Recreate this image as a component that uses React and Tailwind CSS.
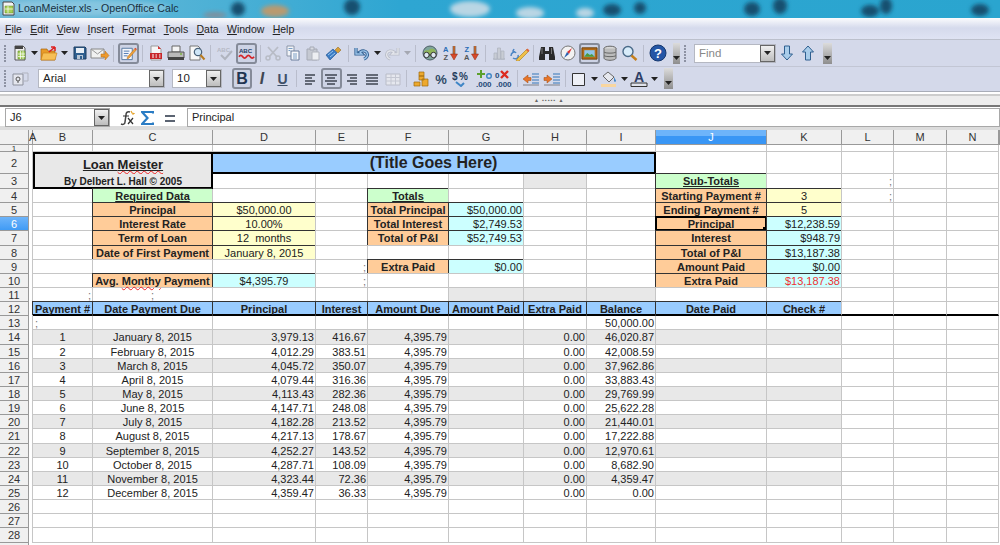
import React from 'react'

const COLS = 'grid grid-cols-[29px_4px_60px_120px_103px_52px_81px_75px_63px_69px_111px_75px_52px_53px_52px_1px]'
const LETTERS = ['A', 'B', 'C', 'D', 'E', 'F', 'G', 'H', 'I', 'J', 'K', 'L', 'M', 'N', '']

const LABEL = 'bg-[#ffcc99] font-bold text-center border-r border-b border-[#333] shadow-[-1px_-1px_0_#333]'
const YELLOW = 'bg-[#ffffcc] text-center border-r border-b border-[#333] shadow-[-1px_-1px_0_#333]'
const CYAN = 'bg-[#ccffff] text-right pr-px border-r border-b border-[#333] shadow-[-1px_-1px_0_#333]'
const CYAN_C = 'bg-[#ccffff] text-center border-r border-b border-[#333] shadow-[-1px_-1px_0_#333]'
const GREEN = 'bg-[#ccffcc] font-bold text-center underline border-r border-b border-[#333] shadow-[-1px_-1px_0_#333]'
const HEAD = 'bg-[#99ccff] font-bold text-center border-r border-b border-[#333] shadow-[-1px_-1px_0_#333]'
const SPECK = 'text-[#777] text-right pr-px'

const wavy = 'underline decoration-wavy decoration-[#e22] decoration-1'

const SHEET = {
  3: { H: { c: 'bg-[#e8e8e8]' }, J: { t: 'Sub-Totals', c: GREEN }, E: {}, L: { t: ';', c: SPECK } },
  4: {
    C: { t: 'Required Data', c: GREEN }, F: { t: 'Totals', c: GREEN },
    J: { t: 'Starting Payment #', c: LABEL }, K: { t: '3', c: YELLOW }, L: { t: ';', c: SPECK },
  },
  5: {
    C: { t: 'Principal', c: LABEL }, D: { t: '$50,000.00', c: YELLOW },
    F: { t: 'Total Principal', c: LABEL }, G: { t: '$50,000.00', c: CYAN },
    J: { t: 'Ending Payment #', c: LABEL }, K: { t: '5', c: YELLOW },
  },
  6: {
    C: { t: 'Interest Rate', c: LABEL }, D: { t: '10.00%', c: YELLOW },
    F: { t: 'Total Interest', c: LABEL }, G: { t: '$2,749.53', c: CYAN },
    J: { t: 'Principal', c: LABEL, sel: true }, K: { t: '$12,238.59', c: CYAN },
  },
  7: {
    C: { t: 'Term of Loan', c: LABEL }, D: { t: '12  months', c: YELLOW + ' whitespace-pre' },
    F: { t: 'Total of P&I', c: LABEL }, G: { t: '$52,749.53', c: CYAN },
    J: { t: 'Interest', c: LABEL }, K: { t: '$948.79', c: CYAN },
  },
  8: {
    C: { t: 'Date of First Payment', c: LABEL }, D: { t: 'January 8, 2015', c: YELLOW },
    J: { t: 'Total of P&I', c: LABEL }, K: { t: '$13,187.38', c: CYAN },
  },
  9: {
    E: { t: ';', c: SPECK }, F: { t: 'Extra Paid', c: LABEL }, G: { t: '$0.00', c: CYAN },
    J: { t: 'Amount Paid', c: LABEL }, K: { t: '$0.00', c: CYAN },
  },
  10: {
    C: { t: <>Avg. <span className={wavy}>Monthy</span> Payment</>, c: LABEL }, D: { t: '$4,395.79', c: CYAN_C },
    E: { t: ';', c: SPECK },
    J: { t: 'Extra Paid', c: LABEL }, K: { t: '$13,187.38', c: CYAN + ' text-[#e33]' },
  },
  11: {
    B: { t: ';', c: SPECK }, C: { t: ';', c: 'text-[#777] text-center' },
    G: { c: 'bg-[#e8e8e8]' }, H: { c: 'bg-[#e8e8e8]' }, I: { c: 'bg-[#e8e8e8]' },
  },
  12: {
    B: { t: 'Payment #', c: HEAD }, C: { t: 'Date Payment Due', c: HEAD }, D: { t: 'Principal', c: HEAD },
    E: { t: 'Interest', c: HEAD }, F: { t: 'Amount Due', c: HEAD }, G: { t: 'Amount Paid', c: HEAD },
    H: { t: 'Extra Paid', c: HEAD }, I: { t: 'Balance', c: HEAD }, J: { t: 'Date Paid', c: HEAD }, K: { t: 'Check #', c: HEAD },
  },
  13: { B: { t: ';', c: 'text-[#777] text-left pl-0.5' }, I: { t: '50,000.00', c: 'text-right pr-px' } },
}

const PAYMENTS = [
  ['January 8, 2015', '3,979.13', '416.67', '46,020.87'],
  ['February 8, 2015', '4,012.29', '383.51', '42,008.59'],
  ['March 8, 2015', '4,045.72', '350.07', '37,962.86'],
  ['April 8, 2015', '4,079.44', '316.36', '33,883.43'],
  ['May 8, 2015', '4,113.43', '282.36', '29,769.99'],
  ['June 8, 2015', '4,147.71', '248.08', '25,622.28'],
  ['July 8, 2015', '4,182.28', '213.52', '21,440.01'],
  ['August 8, 2015', '4,217.13', '178.67', '17,222.88'],
  ['September 8, 2015', '4,252.27', '143.52', '12,970.61'],
  ['October 8, 2015', '4,287.71', '108.09', '8,682.90'],
  ['November 8, 2015', '4,323.44', '72.36', '4,359.47'],
  ['December 8, 2015', '4,359.47', '36.33', '0.00'],
]

PAYMENTS.forEach((p, i) => {
  const r = 'text-right pr-px'
  SHEET[14 + i] = {
    B: { t: String(i + 1), c: 'text-center' }, C: { t: p[0], c: 'text-center' }, D: { t: p[1], c: r }, E: { t: p[2], c: r },
    F: { t: '4,395.79', c: r }, H: { t: '0.00', c: r }, I: { t: p[3], c: r },
  }
})

const ROWS = Array.from({ length: 25 }, (_, i) => i + 4)

function Wallpaper() {
  const dark = [[238, 9, 7, 7], [352, 7, 8, 8], [612, 10, 9, 6], [640, 8, 6, 6], [752, 9, 8, 7], [780, 6, 7, 8], [870, 11, 9, 6], [886, 6, 6, 8], [980, 10, 9, 6]]
  const pale = [[470, 9, 20, 8], [530, 13, 14, 6], [585, 13, 9, 5]]
  return (
    <svg className="absolute inset-0" width="1000" height="18" viewBox="0 0 1000 18">
      <defs>
        <filter id="soft" x="-60%" y="-60%" width="220%" height="220%"><feGaussianBlur stdDeviation="2.2" /></filter>
        <linearGradient id="sky" x1="0" x2="1" y1="0" y2="0">
          <stop offset="0" stopColor="#6fb9d8" />
          <stop offset="0.17" stopColor="#54b3d6" />
          <stop offset="0.4" stopColor="#2ea6d2" />
          <stop offset="1" stopColor="#2aa5cf" />
        </linearGradient>
      </defs>
      <rect width="1000" height="18" fill="url(#sky)" />
      <g filter="url(#soft)">
        <ellipse cx="80" cy="8" rx="90" ry="8" fill="#9fd0e6" opacity="0.6" />
        {dark.map(([x, y, rx, ry]) => <ellipse key={x} cx={x} cy={y} rx={rx} ry={ry} fill="#17506f" />)}
        {pale.map(([x, y, rx, ry]) => <ellipse key={x} cx={x} cy={y} rx={rx} ry={ry} fill="#b9d6e4" />)}
        <ellipse cx="275" cy="11" rx="14" ry="6" fill="#b99a70" />
        <ellipse cx="215" cy="15" rx="12" ry="3" fill="#7f8f9c" />
      </g>
    </svg>
  )
}

const Ic = ({ children, w = 16, h = 16 }) => (
  <svg width={w} height={h} viewBox={`0 0 ${w} ${h}`} className="block">{children}</svg>
)

const Drop = ({ c = '#222' }) => <svg width="7" height="4" viewBox="0 0 7 4"><path d="M0 0h7L3.5 4z" fill={c} /></svg>

const Sep = () => <div className="w-px h-[17px] bg-[#b9bdcc]" />

const Grip = () => (
  <div className="flex flex-col gap-px">
    {[0, 1, 2, 3, 4, 5].map(i => <div key={i} className="w-[3px] h-0.5 border-l-2 border-dotted border-[#8d92a3]" />)}
  </div>
)

const More = ({ className }) => (
  <div className={'flex items-end justify-center pb-1 bg-gradient-to-b from-[#dcdcdc] to-[#8e8e8e] ' + className}>
    <Drop />
  </div>
)

const Toggled = ({ children, className }) => (
  <div className={'flex items-center justify-center rounded-[3px] border-2 border-[#858b99] bg-[#cdd3e5] ' + className}>{children}</div>
)

const IconNew = () => <Ic><path d="M3 1h8l2 2v12H3z" fill="#eee" stroke="#555" /><path d="M3 1h8v3H3z" fill="#444" /><path d="M6 6h7v8H6z" fill="#a8d060" stroke="#5d8a20" strokeWidth=".6" /><path d="M6 9h7M6 11.500h7M8.500 6v8M11 6v8" stroke="#fff" strokeWidth=".7" /></Ic>
const IconOpen = () => <Ic w={18}><path d="M1 4h6l1 2h7v9H1z" fill="#e89a28" stroke="#a8640e" strokeWidth=".7" /><path d="M1 15l2-7h14l-2 7z" fill="#f6bf55" stroke="#c27c14" strokeWidth=".6" /><path d="M9 7l6-5M15 2h-4M15 2v4" stroke="#d22" strokeWidth="1.600" fill="none" /></Ic>
const IconSave = () => <Ic><path d="M2 2h11l1 1v11H2z" fill="#2f5f8f" stroke="#1e3e63" /><path d="M4 3h8v5H4z" fill="#e8eef5" /><path d="M5 10h6v4H5z" fill="#b9c6d6" /><path d="M8 11h2v3H8z" fill="#2f5f8f" /></Ic>
const IconMail = () => <Ic w={20}><path d="M1 4h13v9H1z" fill="#f1f1f1" stroke="#888" /><path d="M1 4l6.500 5L14 4" fill="none" stroke="#999" /><path d="M11 9h4V6l4 4.500L15 15v-3h-4z" fill="#ee9a2e" stroke="#b56a10" strokeWidth=".5" /></Ic>
const IconEdit = () => <Ic w={18}><path d="M2 3h11v12H2z" fill="#f4f6fb" stroke="#5577a0" /><path d="M4 6h6M4 8.500h5M4 11h4" stroke="#4a76b0" /><path d="M8 12l8-9 1.500 1.500-8 9-2 .5z" fill="#f0a23a" stroke="#a9651a" strokeWidth=".5" /><path d="M15.500 3.500l1-1 1.200 1.200-1 1z" fill="#d44" /></Ic>
const IconPdf = () => <Ic><path d="M3 1h7l3 3v11H3z" fill="#f6f6f6" stroke="#999" /><path d="M2 8h12v6H2z" fill="#c7272a" /><path d="M4 10h2M7.500 10h1.500M11 10h1.500M4 12h2M7.500 12h1.500M11 12h1.500" stroke="#fff" /><path d="M10 1l3 3h-3z" fill="#d33" /></Ic>
const IconPrint = () => <Ic w={18}><path d="M5 1h8v6H5z" fill="#f5f5f5" stroke="#666" /><path d="M1 7h16v6H1z" fill="#b9b9b9" stroke="#555" /><path d="M1 12h16v3H1z" fill="#444" /><path d="M13 9h2" stroke="#7cb342" strokeWidth="1.500" /></Ic>
const IconPreview = () => <Ic w={18}><path d="M2 1h8l2 2v12H2z" fill="#f8f8f8" stroke="#777" /><circle cx="10" cy="7" r="3.700" fill="#cfe6f7" stroke="#49627a" strokeWidth="1.200" /><path d="M12.500 10l4 4.500" stroke="#b87a1e" strokeWidth="2" /></Ic>
const IconSpell = () => <Ic w={18}><text x="1" y="7" fontSize="6" fontWeight="700" fontFamily="Liberation Sans, sans-serif" fill="#b4b8c4">ABC</text><path d="M5 10l4 4 7-8" fill="none" stroke="#b0b4bf" strokeWidth="2" /></Ic>
const IconAuto = () => <Ic w={18}><text x="1" y="8" fontSize="6.500" fontWeight="700" fontFamily="Liberation Sans, sans-serif" fill="#1f3f66">ABC</text><path d="M1 12q2-3 4 0t4 0 4 0 4 0" fill="none" stroke="#d3262a" strokeWidth="1.800" /></Ic>
const IconCut = () => <Ic><path d="M3 2l9 10M13 2L4 12" stroke="#b8bcc6" strokeWidth="1.800" /><circle cx="3" cy="13" r="2" fill="none" stroke="#b8bcc6" strokeWidth="1.500" /><circle cx="13" cy="13" r="2" fill="none" stroke="#b8bcc6" strokeWidth="1.500" /></Ic>
const IconCopy = () => <Ic><path d="M2 1h7v10H2z" fill="#f2f4f8" stroke="#8b95a8" /><path d="M6 6h8v9H6z" fill="#f7f8fb" stroke="#6b7f9c" /><path d="M3.500 3.500h4M3.500 5.500h2M8 9h4M8 11h4M8 13h4" stroke="#5b89b8" strokeWidth=".8" /></Ic>
const IconPaste = () => <Ic><path d="M2 4h10v11H2z" fill="#c5c9d2" stroke="#a6aab5" /><path d="M5 2h4v3H5z" fill="#d8dbe2" stroke="#a6aab5" /><path d="M7 7h7v8H7z" fill="#eceef2" stroke="#b0b4be" /></Ic>
const IconBrush = () => <Ic w={18}><path d="M1 10l7-6 4 4-7 7z" fill="#3a7cc4" stroke="#1f4f8c" strokeWidth=".6" /><path d="M3 10l5-4M5 12l5-4" stroke="#9cc7ee" /><path d="M10 5l3-3 3 3-3 3z" fill="#d8a038" stroke="#8c6318" strokeWidth=".5" /></Ic>
const IconUndo = () => <Ic><path d="M2 3v6h6L6 7c3-2 6-1 7 1s0 5-3 6" fill="none" stroke="#2f5f92" strokeWidth="3.200" /><path d="M2 3v6h6L6 7c3-2 6-1 7 1s0 5-3 6" fill="none" stroke="#9cc4e8" strokeWidth="1.400" /></Ic>
const IconRedo = () => <Ic><path d="M14 3v6H8l2-2C7 5 4 6 3 8s0 5 3 6" fill="none" stroke="#b9bdc8" strokeWidth="3" /><path d="M14 3v6H8l2-2C7 5 4 6 3 8s0 5 3 6" fill="none" stroke="#e4e6ec" strokeWidth="1.300" /></Ic>
const IconNav = () => <Ic w={18}><circle cx="9" cy="8" r="7" fill="#7fa59b" stroke="#4f5f68" /><path d="M3 7c2-3 4-1 5-2s3-2 6 0l1 3-3 3-3-1-4 2z" fill="#8fb55a" /><circle cx="5.500" cy="10" r="2.700" fill="#dfe9f2" stroke="#333" /><circle cx="12.500" cy="10" r="2.700" fill="#dfe9f2" stroke="#333" /><path d="M8 10h2" stroke="#333" /></Ic>
const IconSortAZ = () => <Ic w={18}><text x="1" y="7" fontSize="7.500" fontWeight="700" fontFamily="Liberation Sans, sans-serif" fill="#2a6db5">A</text><text x="1.500" y="15" fontSize="7.500" fontWeight="700" fontFamily="Liberation Sans, sans-serif" fill="#555">Z</text><path d="M12 1v9" stroke="#444" strokeWidth="2.600" /><path d="M12 1v9" stroke="#e8742a" strokeWidth="1.400" /><path d="M8.500 9h7L12 15z" fill="#d94a2a" stroke="#8a2a15" strokeWidth=".5" /></Ic>
const IconSortZA = () => <Ic w={18}><text x="1.500" y="7" fontSize="7.500" fontWeight="700" fontFamily="Liberation Sans, sans-serif" fill="#2a6db5">Z</text><text x="1" y="15" fontSize="7.500" fontWeight="700" fontFamily="Liberation Sans, sans-serif" fill="#555">A</text><path d="M12 1v9" stroke="#444" strokeWidth="2.600" /><path d="M12 1v9" stroke="#e8742a" strokeWidth="1.400" /><path d="M8.500 9h7L12 15z" fill="#d94a2a" stroke="#8a2a15" strokeWidth=".5" /></Ic>
const IconChart = () => <Ic><path d="M2 14h12" stroke="#b5b9c4" strokeWidth="1.500" /><path d="M3 8h3v6H3zM6.500 3h3v11h-3zM10 6h3v8h-3z" fill="#c8ccd4" stroke="#aeb2bd" strokeWidth=".7" /></Ic>
const IconPencil = () => <Ic w={20}><path d="M1 11c0-4 4-5 5-3M5 7l-2-1 1-2M3 13c3 2 6 0 5-3" fill="none" stroke="#4e86c4" strokeWidth="1.500" /><path d="M7 14l10-10 2 2L9 16l-3 .5z" fill="#efc04a" stroke="#a87a18" strokeWidth=".6" /><path d="M16 5l1.500-1.500 2 2L18 7z" fill="#d64" /></Ic>
const IconBinoc = () => <Ic w={18}><path d="M3 2h4v4h4V2h4l2 10v3h-6V9H7v6H1v-3z" fill="#2a2a2a" /><path d="M3.500 3h1v6h-1zM13 3h1v6h-1z" fill="#777" /></Ic>
const IconCompass = () => <Ic w={18}><circle cx="9" cy="8" r="7" fill="#f2f2f2" stroke="#777" /><path d="M13 3l-3 6-2-2z" fill="#d33" /><path d="M5 13l3-6 2 2z" fill="#2a62b0" /></Ic>
const IconGallery = () => <Ic w={18}><path d="M1 2.500h16v12H1z" fill="#b36b18" stroke="#70430f" /><path d="M3.500 5h11v7h-11z" fill="#8fc6ea" /><path d="M3.500 12l3-4 3 2 2-1 3 3z" fill="#4e9a3a" /></Ic>
const IconDb = () => <Ic><ellipse cx="8" cy="3.500" rx="6" ry="2.300" fill="#d8d8d8" stroke="#666" /><path d="M2 3.500v9.500c0 1.300 2.700 2.300 6 2.300s6-1 6-2.300V3.500" fill="#bcbcbc" stroke="#666" /><path d="M2 7c1 1.500 11 1.500 12 0M2 10.500c1 1.500 11 1.500 12 0" fill="none" stroke="#666" /></Ic>
const IconFind = () => <Ic w={18}><circle cx="7" cy="6.500" r="5" fill="#d8ecfa" stroke="#4a6a88" strokeWidth="1.400" /><path d="M10.500 10.500l5 4.500" stroke="#c47f1c" strokeWidth="2.400" /></Ic>
const IconHelp = () => <Ic w={18} h={18}><circle cx="9" cy="9" r="8" fill="#2456a6" stroke="#15376e" /><text x="9" y="14" textAnchor="middle" fontSize="13" fontWeight="700" fontFamily="Liberation Sans, sans-serif" fill="#fff">?</text></Ic>
const IconDown = () => <Ic><path d="M5.500 1h5v8h3L8 15 2.500 9h3z" fill="#a9cdea" stroke="#2f5f8f" /></Ic>
const IconUp = () => <Ic><path d="M5.500 15h5V7h3L8 1 2.500 7h3z" fill="#a9cdea" stroke="#2f5f8f" /></Ic>

const IconAnchor = () => <Ic w={18}><path d="M1 3h10v11H1z" fill="#e4e6ee" stroke="#8c909c" /><path d="M10 2h6v8h-5" fill="none" stroke="#b0b3be" /><circle cx="6" cy="8" r="2" fill="none" stroke="#555" /><path d="M6 10v2" stroke="#555" /></Ic>
const lines = d => <Ic><path d={d} stroke="#3f4652" strokeWidth="1.300" /></Ic>
const AlignLeft = () => lines('M3 4h10M3 7h7M3 10h10M3 13h7')
const AlignCenter = () => lines('M2 4h12M4 7h8M2 10h12M4 13h8')
const AlignRight = () => lines('M3 4h10M6 7h7M3 10h10M6 13h7')
const AlignJust = () => lines('M2 4h12M2 7h12M2 10h12M2 13h12')
const IconGrid = () => <Ic w={18}><path d="M2 3h14v11H2z" fill="#e5e7ee" stroke="#b9bcc8" /><path d="M2 6.500h14M2 10h14M7 3v11M11.500 3v11" stroke="#c4c7d2" /></Ic>
const IconCoins = () => <Ic w={18}><path d="M7 1h5v4H7zM7 5h5v4H7zM10 8h6v7h-6zM2 11h6v4H2z" fill="#eda92e" stroke="#9f6a10" strokeWidth=".7" /></Ic>
const T = ({ children, x, y, s, c, a }) => <text x={x} y={y} fontSize={s} fill={c} textAnchor={a} fontWeight="700" fontFamily="Liberation Sans, sans-serif">{children}</text>
const IconPct = () => <Ic><T x="8" y="13" s="13" c="#2f4a66" a="middle">%</T></Ic>
const IconCur = () => <Ic w={20}><T x="0" y="9" s="10" c="#1f3c5c">$</T><T x="7" y="9" s="10" c="#1f3c5c">%</T><path d="M4 11l5 4 3-3" fill="none" stroke="#3f86c6" strokeWidth="2" /></Ic>
const IconAddDec = () => <Ic w={20} h={18}><path d="M3 3h3V0h2v3h3v2H8v3H6V5H3z" fill="#5ca02c" /><circle cx="15" cy="6" r="2.300" fill="none" stroke="#3f86c6" strokeWidth="1.400" /><T x="2" y="17" s="8" c="#1f4a78">.000</T></Ic>
const IconDelDec = () => <Ic w={20} h={18}><T x="1" y="8" s="8" c="#1f4a78">0</T><path d="M7 1l7 7M14 1L7 8" stroke="#dc2a20" strokeWidth="2.400" /><T x="2" y="17" s="8" c="#1f4a78">.000</T></Ic>
const IconOutdent = () => <Ic w={18}><path d="M1 8l5-4v2.500h3v3H6V12z" fill="#e8762a" stroke="#9f4a10" strokeWidth=".5" /><path d="M10 3h7M10 6h7M10 9h7M10 12h7" stroke="#3577b8" /><path d="M1 14h16" stroke="#444" strokeWidth=".6" /></Ic>
const IconIndent = () => <Ic w={18}><path d="M9 8L4 4v2.500H1v3h3V12z" fill="#e8762a" stroke="#9f4a10" strokeWidth=".5" /><path d="M10 3h7M10 6h7M10 9h7M10 12h7" stroke="#3577b8" /><path d="M1 14h16" stroke="#444" strokeWidth=".6" /></Ic>
const IconBorder = () => <Ic><path d="M1.500 2.500h12v12h-12z" fill="#eef0f6" stroke="#333" /></Ic>
const IconFill = () => <Ic w={18} h={17}><path d="M3 6l5-4 6 5-5 5z" fill="#e6e8ee" stroke="#666" /><path d="M14 7c1 2 2 3 2 4s-2 1-2 0z" fill="#3f86c6" /><path d="M1 14h15v3H1z" fill="#f8d6a0" /></Ic>
const IconFontColor = () => <Ic w={18} h={17}><T x="9" y="12" s="14" c="#2e3e66" a="middle">A</T><path d="M1 13h16v3.500H1z" fill="#dfe2ea" stroke="#333" /></Ic>

const Combo = ({ value, className, muted }) => (
  <div className={'flex items-stretch bg-white border border-[#b5b8c2] ' + className}>
    <span className={'flex-1 pl-1 text-[11.500px] leading-[17px] ' + (muted ? 'text-[#888]' : 'text-[#222]')}>{value}</span>
    <div className="w-[15px] flex items-center justify-center border border-[#666] bg-gradient-to-b from-[#f0f0f0] to-[#bdbdbd]"><Drop /></div>
  </div>
)

const BAR1 = [
  ['w-[11px]', <Grip />], ['w-[18px]', <IconNew />], ['w-2.5', <Drop />], ['w-5', <IconOpen />], ['w-2.5', <Drop />],
  ['w-[21px]', <IconSave />], ['w-5', <IconMail />], ['w-[7px]', <Sep />],
  ['w-[22px]', <Toggled className="w-[21px] h-[21px]"><IconEdit /></Toggled>], ['w-1.5', <Sep />],
  ['w-[21px]', <IconPdf />], ['w-5', <IconPrint />], ['w-[21px]', <IconPreview />], ['w-[7px]', <Sep />],
  ['w-[21px]', <IconSpell />], ['w-[22px]', <Toggled className="w-[21px] h-[21px]"><IconAuto /></Toggled>], ['w-1.5', <Sep />],
  ['w-5', <IconCut />], ['w-5', <IconCopy />], ['w-[19px]', <IconPaste />], ['w-[23px]', <IconBrush />], ['w-[7px]', <Sep />],
  ['w-5', <IconUndo />], ['w-2.5', <Drop />], ['w-5', <IconRedo />], ['w-2.5', <Drop c="#a5a8b2" />], ['w-[7px]', <Sep />],
  ['w-[21px]', <IconNav />], ['w-[21px]', <IconSortAZ />], ['w-[21px]', <IconSortZA />], ['w-1.5', <Sep />],
  ['w-[22px]', <IconChart />], ['w-5', <IconPencil />], ['w-1.5', <Sep />],
  ['w-[21px]', <IconBinoc />], ['w-[21px]', <IconCompass />], ['w-[22px]', <Toggled className="w-[21px] h-[21px]"><IconGallery /></Toggled>],
  ['w-5', <IconDb />], ['w-5', <IconFind />], ['w-[7px]', <Sep />], ['w-[21px]', <IconHelp />],
]

const BAR2 = [
  ['w-[11px]', <Grip />], ['w-[19px]', <IconAnchor />],
  ['w-[135px] pl-2', <Combo value="Arial" className="w-[127px] h-[19px]" />],
  ['w-[57px] pl-[7px]', <Combo value="10" className="w-[50px] h-[19px]" />],
  ['w-[30px] pl-2.5', <Toggled className="w-5 h-[21px] font-bold text-base leading-none text-[#1f3552]">B</Toggled>],
  ['w-5 text-base italic font-bold text-[#3f4652]', 'I'], ['w-[21px] text-sm font-bold underline text-[#3f5068]', 'U'], ['w-[7px]', <Sep />],
  ['w-5', <AlignLeft />], ['w-[22px]', <Toggled className="w-[21px] h-[21px]"><AlignCenter /></Toggled>], ['w-[19px]', <AlignRight />], ['w-[21px]', <AlignJust />],
  ['w-[21px]', <IconGrid />], ['w-[7px]', <Sep />],
  ['w-[21px]', <IconCoins />], ['w-5', <IconPct />], ['w-[22px]', <IconCur />], ['w-[21px]', <IconAddDec />], ['w-5', <IconDelDec />], ['w-1.5', <Sep />],
  ['w-[21px]', <IconOutdent />], ['w-[21px]', <IconIndent />], ['w-[7px]', <Sep />],
  ['w-5', <IconBorder />], ['w-2.5', <Drop />], ['w-5', <IconFill />], ['w-2.5', <Drop />], ['w-5', <IconFontColor />], ['w-2.5', <Drop />],
]

const MENU = [['', 'F', 'ile'], ['', 'E', 'dit'], ['', 'V', 'iew'], ['', 'I', 'nsert'], ['F', 'o', 'rmat'], ['', 'T', 'ools'], ['', 'D', 'ata'], ['', 'W', 'indow'], ['', 'H', 'elp']]

const slots = items => items.map(([w, node], i) => (
  <div key={i} className={'flex flex-none items-center justify-center ' + w}>{node}</div>
))

function RowHead({ n, h, active }) {
  return (
    <div className={'overflow-hidden text-center border-r border-b border-[#999] text-[#333] ' + h + (active ? ' bg-gradient-to-b from-[#6db4fa] to-[#3f9bf5] text-white' : ' bg-[#f0f0f0]')}>{n}</div>
  )
}

function GridCell({ cell, gray, rule }) {
  const base = 'min-w-0 whitespace-nowrap overflow-visible border-r border-b border-[#c6c6c6] ' + (rule ? 'border-b-2! border-b-black! ' : '')
  if (!cell) return <div className={base + (gray ? 'bg-[#e8e8e8]' : '')} />
  return (
    <div className={base + 'relative ' + (cell.c || '') + (gray ? ' bg-[#e8e8e8]' : '')}>
      {cell.t}
      {cell.sel && (
        <div className="absolute -inset-px border-2 border-black">
          <div className="absolute -right-[3px] -bottom-[3px] size-[5px] bg-black" />
        </div>
      )}
    </div>
  )
}

function SheetRow({ n }) {
  const data = SHEET[n] || {}
  const gray = n >= 14 && n <= 24 && n % 2 === 0
  return (
    <div className={COLS + ' grid-rows-[14.15px] h-[14.15px] leading-[15px]'}>
      <RowHead n={n} h="h-full" active={n === 6} />
      <div className="bg-white border-r border-[#c6c6c6]" />
      {LETTERS.slice(1, 14).map(l => (
        <GridCell key={l} cell={data[l]} gray={gray && 'BCDEFGHIJK'.includes(l)} rule={n === 12} />
      ))}
      <div />
    </div>
  )
}

export default function App() {
  return (
    <div className="relative w-[1000px] h-[545px] overflow-hidden bg-white text-[11px] text-[#222] font-['Liberation_Sans',Arial,sans-serif]">
      <div className="relative h-[17px] flex items-center">
        <Wallpaper />
        <svg className="relative ml-0.5 mr-[3px]" width="13" height="15" viewBox="0 0 13 15">
          <path d="M1 1h9l2 2v11H1z" fill="#f3f3f3" stroke="#444" />
          <path d="M3 5h8v7H3z" fill="#a9cf55" stroke="#5d8a20" strokeWidth=".5" />
          <path d="M3 8h8M6 5v7" stroke="#fff" strokeWidth=".7" />
        </svg>
        <span className="relative text-[10.600px] text-[#17303f] pt-px">LoanMeister.xls - OpenOffice Calc</span>
      </div>

      <div className="h-[23px] bg-gradient-to-b from-white via-[#d5daec] to-[#dfe3f3] border-b border-[#bcc0cc] flex items-end pb-px pl-[5px] gap-[8.300px] text-[10.500px] text-[#222]">
        {MENU.map(([a, b, c]) => (
          <span key={a + b + c}>{a}<span className="underline">{b}</span>{c}</span>
        ))}
      </div>

      <div className="h-[27px] bg-[#d4d9ea] flex items-center border-b border-[#c2c6d4]">
        {slots(BAR1)}
        <div className="w-[5px]" />
        <More className="w-[7px] h-[21px]" />
        <div className="w-[11px] flex justify-center"><Grip /></div>
        <div className="w-[3px]" />
        <Combo value="Find" muted className="w-[82px] h-[19px]" />
        <div className="w-px" />
        <div className="flex w-[41px]">
          <div className="w-5 flex justify-center"><IconDown /></div>
          <div className="w-[21px] flex justify-center"><IconUp /></div>
        </div>
        <div className="w-[5px]" />
        <More className="w-[9px] h-[21px]" />
      </div>

      <div className="h-[25px] pb-px bg-[#d4d9ea] flex items-center border-b border-[#a9adb8]">
        {slots(BAR2)}
        <div className="w-[5px]" />
        <More className="w-[9px] h-[21px]" />
      </div>

      <div className="relative h-[15px] bg-[#ededed] border-b-2 border-[#777]">
        <div className="h-0.5 bg-white" />
        <div className="h-0.5 bg-[#cdcdcd]" />
        <div className="absolute top-[5px] left-[534px] text-[5px] leading-[6px] text-[#666] tracking-[1px]">▲ ▪▪▪▪▪ ▲</div>
      </div>

      <div className="h-[23px] bg-white flex items-start pt-px border-b-4 border-[#dcdcdc]">
        <div className="ml-[5px] w-[105px] h-[19px] flex border border-[#a8a8a8]">
          <span className="flex-1 pl-1 leading-[17px]">J6</span>
          <div className="w-[15px] flex items-center justify-center border border-[#666] bg-gradient-to-b from-[#f0f0f0] to-[#bdbdbd]"><Drop /></div>
        </div>
        <svg className="ml-[9px] mt-0.5" width="16" height="16" viewBox="0 0 16 16"><path d="M11 2c-3-1-4 1-4 3l-1 7c0 2-2 3-4 2" fill="none" stroke="#444" strokeWidth="1.500" /><path d="M4 6h6M9 8l5 6M14 8l-5 6" stroke="#333" strokeWidth="1.200" /><path d="M12 1l1 2 2 .5-1.500 1" fill="none" stroke="#e6a52c" strokeWidth="1.200" /></svg>
        <svg className="ml-1.5 mt-0.5" width="13" height="16" viewBox="0 0 13 16"><path d="M12 3.500V2H1l5.500 6L1 14h11v-1.500" fill="none" stroke="#2a7cc4" strokeWidth="2.200" /></svg>
        <div className="ml-[11px] mt-[7px] flex flex-col gap-[3px]">
          <div className="h-0.5 w-[10px] bg-[#5b6472]" />
          <div className="h-0.5 w-[10px] bg-[#5b6472]" />
        </div>
        <div className="ml-3 flex-1 h-[19px] border border-[#a8a8a8] pl-1 leading-[17px]">Principal</div>
      </div>

      <div className={COLS + ' grid-rows-[14px] h-[15px] bg-[#f0f0f0] text-[#333] leading-[15px] border-b border-[#999]'}>
        <div className="border-r border-[#999]" />
        {LETTERS.map((l, i) => (
          <div key={i} className={'text-center border-r border-[#999] ' + (l === 'J' ? 'bg-gradient-to-b from-[#6db4fa] from-40% to-[#3996f5] to-40% text-white' : '')}>{l}</div>
        ))}
      </div>

      <div className={COLS + ' grid-rows-[7px] h-[7px]'}>
        <RowHead n={1} h="h-full text-[8px] leading-[7px]" />
        <div className="border-r border-[#c6c6c6]" />
        {LETTERS.slice(1, 14).map(l => <div key={l} className="border-r border-b border-[#c6c6c6]" />)}
      </div>

      <div className={COLS + ' grid-rows-[22px] h-[22px]'}>
        <RowHead n={2} h="h-full leading-[22px]" />
        <div className="border-r border-[#c6c6c6]" />
        <div className="col-span-2 bg-[#e8e8e8] border-2 border-b-0 border-black text-center text-[13px] font-bold leading-[22px]">
          <span className="underline">Loan <span className={wavy}>Meister</span></span>
        </div>
        <div className="col-span-6 bg-[#99ccff] border-2 border-l-0 border-black text-center text-base font-bold leading-[18px]">(Title Goes Here)</div>
        {['J', 'K', 'L', 'M', 'N'].map(l => <div key={l} className="border-r border-b border-[#c6c6c6]" />)}
      </div>

      <div className={COLS + ' grid-rows-[15px] h-[15px] leading-[15px]'}>
        <RowHead n={3} h="h-full" />
        <div className="border-r border-[#c6c6c6]" />
        <div className="col-span-2 bg-[#e8e8e8] border-2 border-t-0 border-black text-center text-[10px] font-bold">By Delbert L. Hall © 2005</div>
        {['D', 'E', 'F', 'G', 'H', 'I', 'J', 'K', 'L', 'M', 'N'].map(l => (
          <GridCell key={l} cell={SHEET[3][l]} />
        ))}
      </div>

      {ROWS.map(n => <SheetRow key={n} n={n} />)}
      <div className={COLS + ' grid-rows-[14.15px] h-[14.15px]'}>
        <div className="bg-[#f0f0f0] border-r border-[#999]" />
      </div>
    </div>
  )
}
